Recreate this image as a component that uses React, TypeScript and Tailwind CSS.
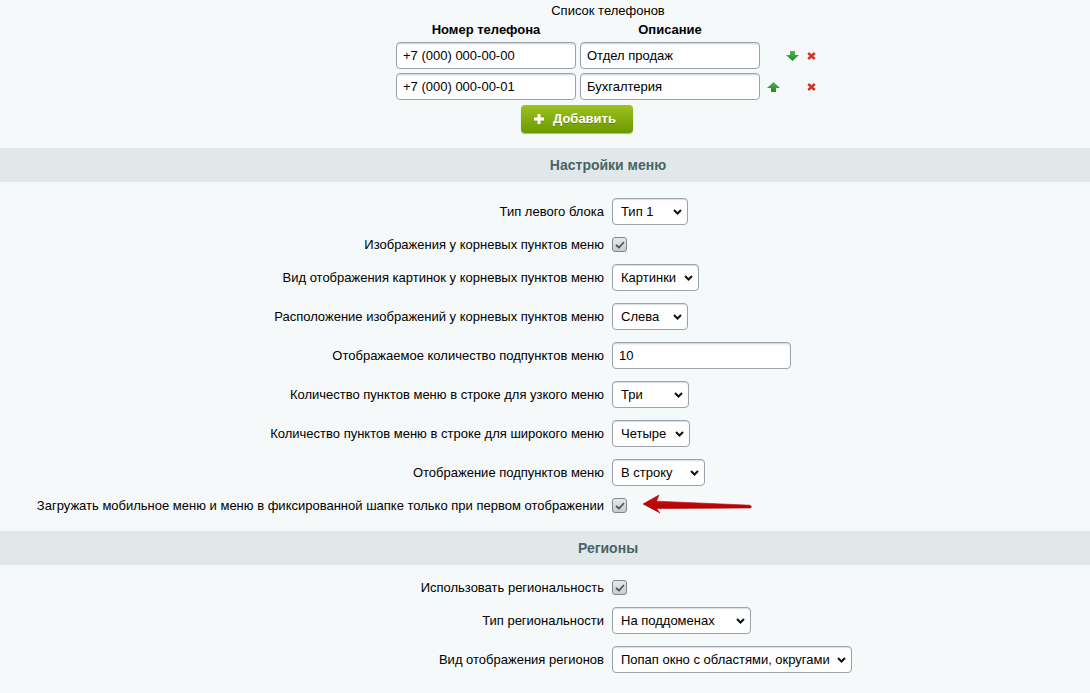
import React from "react";

const font = { fontFamily: '"Liberation Sans", Arial, sans-serif' };

function Chevron() {
  return (
    <svg width="9" height="6" viewBox="0 0 9 6" className="shrink-0">
      <path d="M1 1 L4.5 4.5 L8 1" fill="none" stroke="#111" strokeWidth="2" />
    </svg>
  );
}

function Select({ value, w }: { value: string; w: string }) {
  return (
    <div
      className={`${w} h-[27px] flex items-center justify-between pl-[8px] pr-[5px] bg-white border border-[#9aa3ab] rounded-[4px] text-[13px] text-black shadow-[inset_0_1px_1px_rgba(180,188,191,0.5)]`}
    >
      <span className="whitespace-nowrap">{value}</span>
      <Chevron />
    </div>
  );
}

function TextInput({ value, w }: { value: string; w: string }) {
  return (
    <div
      className={`${w} h-[27px] flex items-center pl-[6px] bg-white border border-[#9aa3ab] rounded-[4px] text-[13px] text-black shadow-[inset_0_2px_2px_-1px_rgba(180,188,191,0.7)]`}
    >
      {value}
    </div>
  );
}

function Checkbox() {
  return (
    <div className="w-[15px] h-[15px] rounded-[3px] border border-[#80878d] bg-gradient-to-b from-[#e6e9eb] to-[#c6ccd0] flex items-center justify-center">
      <svg width="10" height="8" viewBox="0 0 10 8">
        <path d="M1 4 L4 6.5 L9 1" fill="none" stroke="#4d5358" strokeWidth="1.7" />
      </svg>
    </div>
  );
}

function Row({ label, children, tall = true }: { label: string; children: React.ReactNode; tall?: boolean }) {
  return (
    <div className={`grid grid-cols-[604px_1fr] gap-x-2 items-center ${tall ? "h-[39px]" : "h-[27px]"}`}>
      <div className="text-right text-[13px] text-black whitespace-nowrap">{label}</div>
      <div className="flex items-center">{children}</div>
    </div>
  );
}

function SectionHeader({ title }: { title: string }) {
  return (
    <div className="h-[34px] bg-[#e0e8ea] flex items-center justify-center pl-[126px]">
      <span className="text-[14px] font-bold text-[#4b6267]">{title}</span>
    </div>
  );
}

function ArrowDown() {
  return (
    <svg width="13" height="10" viewBox="0 0 13 10">
      <defs>
        <linearGradient id="gd" x1="0" y1="0" x2="0" y2="1">
          <stop offset="0" stopColor="#4fb84f" />
          <stop offset="1" stopColor="#1f8a1f" />
        </linearGradient>
      </defs>
      <path d="M4 0 H9 V4 H13 L6.5 10 L0 4 H4 Z" fill="url(#gd)" />
    </svg>
  );
}

function ArrowUp() {
  return (
    <svg width="13" height="10" viewBox="0 0 13 10">
      <defs>
        <linearGradient id="gu" x1="0" y1="0" x2="0" y2="1">
          <stop offset="0" stopColor="#4fb84f" />
          <stop offset="1" stopColor="#1f8a1f" />
        </linearGradient>
      </defs>
      <path d="M6.5 0 L13 6 H9 V10 H4 V6 H0 Z" fill="url(#gu)" />
    </svg>
  );
}

function Cross() {
  return (
    <svg width="9" height="8" viewBox="0 0 9 8">
      <path d="M1.2 1 L7.8 7 M7.8 1 L1.2 7" stroke="#d7321c" strokeWidth="2.4" />
    </svg>
  );
}

function PhoneRow({ phone, desc, up, down }: { phone: string; desc: string; up?: boolean; down?: boolean }) {
  return (
    <div className="flex items-center h-[27px]">
      <TextInput value={phone} w="w-[180px]" />
      <div className="w-[4px]" />
      <TextInput value={desc} w="w-[180px]" />
      <div className="w-[6px]" />
      <div className="w-[14px] flex justify-center">{up && <ArrowUp />}</div>
      <div className="w-[5px]" />
      <div className="w-[14px] flex justify-center">{down && <ArrowDown />}</div>
      <div className="w-[8px]" />
      <Cross />
    </div>
  );
}

export default function App() {
  return (
    <div className="w-[1090px] h-[693px] overflow-hidden bg-[#f5f9f9] relative" style={font}>
      {/* phone list */}
      <div className="h-[148px] pl-[396px] pt-[3px]">
        <div className="w-[424px] flex flex-col">
          <div className="h-[16px] leading-[16px] text-center text-[13px] text-black">Список телефонов</div>
          <div className="h-[20px] mt-[3px] flex text-[13px] font-bold text-black leading-[16px]">
            <div className="w-[180px] text-center">Номер телефона</div>
            <div className="w-[4px]" />
            <div className="w-[180px] text-center">Описание</div>
          </div>
          <div className="flex flex-col gap-[4px]">
            <PhoneRow phone="+7 (000) 000-00-00" desc="Отдел продаж" down />
            <PhoneRow phone="+7 (000) 000-00-01" desc="Бухгалтерия" up />
          </div>
          <div className="mt-[5px] pl-[125px]">
            <div className="w-[112px] h-[28px] rounded-[4px] bg-gradient-to-b from-[#9cc21d] to-[#6c9900] shadow-[0_1px_1px_rgba(0,0,0,0.3)] flex items-center pl-[12px] gap-[8px] text-white text-[13px] font-bold [text-shadow:0_1px_0_rgba(0,0,0,0.25)]">
              <svg width="12" height="12" viewBox="0 0 12 12">
                <path d="M6 1 V11 M1 6 H11" stroke="#fff" strokeWidth="3" />
              </svg>
              <span>Добавить</span>
            </div>
          </div>
        </div>
      </div>

      <SectionHeader title="Настройки меню" />
      <div className="pt-[10px] pb-[12px]">
        <Row label="Тип левого блока">
          <Select value="Тип 1" w="w-[76px]" />
        </Row>
        <Row label="Изображения у корневых пунктов меню" tall={false}>
          <Checkbox />
        </Row>
        <Row label="Вид отображения картинок у корневых пунктов меню">
          <Select value="Картинки" w="w-[87px]" />
        </Row>
        <Row label="Расположение изображений у корневых пунктов меню">
          <Select value="Слева" w="w-[76px]" />
        </Row>
        <Row label="Отображаемое количество подпунктов меню">
          <TextInput value="10" w="w-[179px]" />
        </Row>
        <Row label="Количество пунктов меню в строке для узкого меню">
          <Select value="Три" w="w-[77px]" />
        </Row>
        <Row label="Количество пунктов меню в строке для широкого меню">
          <Select value="Четыре" w="w-[78px]" />
        </Row>
        <Row label="Отображение подпунктов меню">
          <Select value="В строку" w="w-[93px]" />
        </Row>
        <Row label="Загружать мобильное меню и меню в фиксированной шапке только при первом отображении" tall={false}>
          <Checkbox />
        </Row>
      </div>

      <SectionHeader title="Регионы" />
      <div className="pt-[9px]">
        <Row label="Использовать региональность" tall={false}>
          <Checkbox />
        </Row>
        <Row label="Тип региональности">
          <Select value="На поддоменах" w="w-[139px]" />
        </Row>
        <Row label="Вид отображения регионов">
          <Select value="Попап окно с областями, округами" w="w-[240px]" />
        </Row>
      </div>

      {/* red pointer annotation */}
      <svg className="absolute left-[640px] top-[493px]" width="116" height="22" viewBox="0 0 116 22">
        <defs>
          <linearGradient id="ra" x1="0" y1="0" x2="0" y2="1">
            <stop offset="0" stopColor="#d40d0d" />
            <stop offset="1" stopColor="#a80000" />
          </linearGradient>
        </defs>
        <path
          d="M3 11 L19 2 L16.5 8.2 L110 12.2 Q112.5 13.4 110.5 15 L16.5 15.6 L20 20 Z"
          fill="url(#ra)"
          stroke="#b00000"
          strokeWidth="0.6"
          strokeLinejoin="round"
        />
      </svg>
    </div>
  );
}
